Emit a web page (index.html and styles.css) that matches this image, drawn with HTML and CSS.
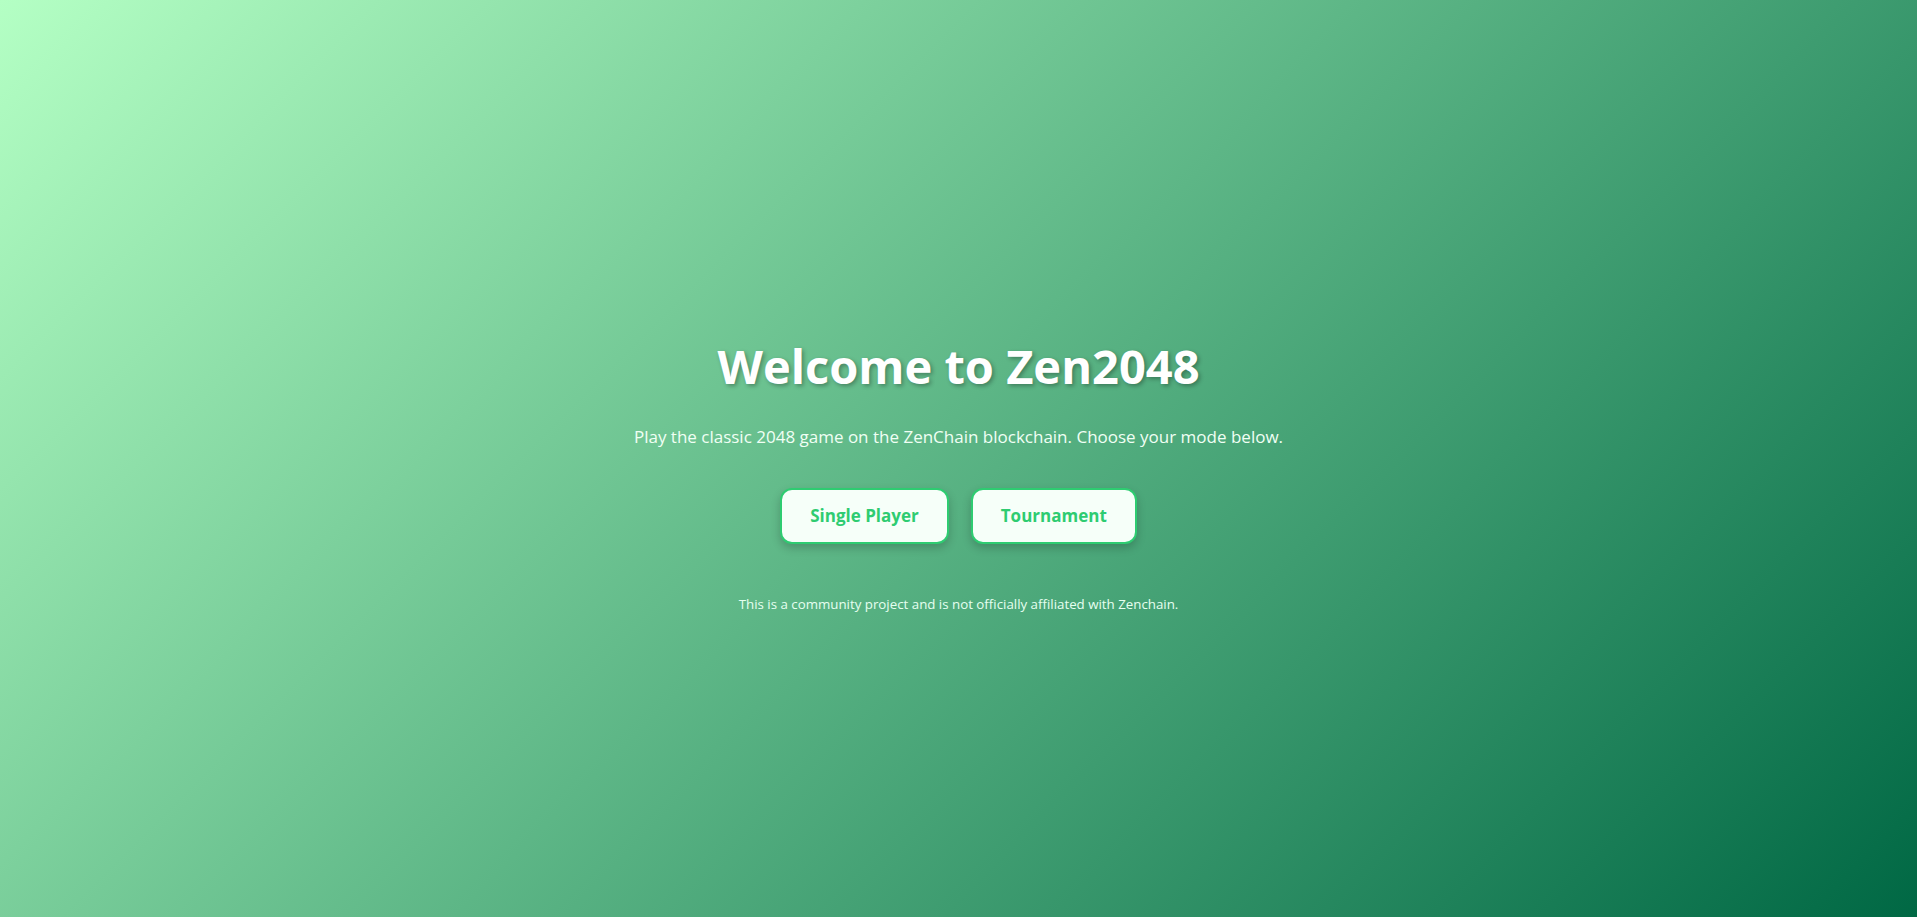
FILE: index.html
```html
<!DOCTYPE html>
<html lang="en">
<head>
<meta charset="utf-8">
<title>Zen2048</title>
<link rel="stylesheet" href="styles.css">
</head>
<body>
<main class="welcome">
  <h1 class="title">Welcome to Zen2048</h1>
  <p class="subtitle">Play the classic 2048 game on the ZenChain blockchain. Choose your mode below.</p>
  <div class="modes">
    <button class="mode-btn">Single Player</button>
    <button class="mode-btn">Tournament</button>
  </div>
  <p class="disclaimer">This is a community project and is not officially affiliated with Zenchain.</p>
</main>
</body>
</html>
```

FILE: styles.css
```css
html, body {
  margin: 0;
  padding: 0;
  height: 100%;
}

body {
  font-family: "Open Sans", "Noto Sans", "Liberation Sans", sans-serif;
  background: linear-gradient(135deg, #b4ffc4 0%, #006844 100%);
  color: #ffffff;
}

.welcome {
  min-height: 100vh;
  box-sizing: border-box;
  display: flex;
  flex-direction: column;
  align-items: center;
  justify-content: center;
  text-align: center;
  padding-top: 34px;
}

.title {
  margin: 0;
  font-size: 47px;
  font-weight: 700;
  line-height: 1.2;
  color: #ffffff;
  text-shadow: 2px 2px 4px rgba(0, 0, 0, 0.3);
}

.subtitle {
  margin: 31px 0 0;
  font-size: 17px;
  line-height: 1.4;
  color: #f0fff4;
}

.modes {
  display: flex;
  gap: 22px;
  margin-top: 39px;
}

.mode-btn {
  font-family: inherit;
  font-size: 17px;
  font-weight: 700;
  color: #2ecc71;
  background: #f6fff9;
  border: 2px solid #2ecc71;
  border-radius: 12px;
  padding: 14px 28px;
  line-height: 24px;
  box-shadow: 0 4px 10px rgba(0, 0, 0, 0.2);
  cursor: pointer;
}

.disclaimer {
  margin: 51px 0 0;
  font-size: 13.3px;
  color: #e6fff0;
}
```
